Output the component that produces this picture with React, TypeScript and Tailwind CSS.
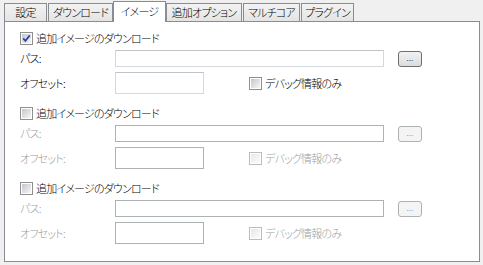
import React from "react";

type Tab = { label: string; w: string; ml: string; active?: boolean };

const TABS: Tab[] = [
  { label: "設定", w: "w-[43px]", ml: "ml-0" },
  { label: "ダウンロード", w: "w-[65px]", ml: "ml-[1px]" },
  { label: "イメージ", w: "w-[53px]", ml: "ml-0", active: true },
  { label: "追加オプション", w: "w-[76px]", ml: "ml-0" },
  { label: "マルチコア", w: "w-[57px]", ml: "ml-[1px]" },
  { label: "プラグイン", w: "w-[53px]", ml: "ml-[1px]" },
];

function CheckBox({ checked, disabled }: { checked?: boolean; disabled?: boolean }) {
  return (
    <span
      className={
        disabled
          ? "relative flex w-[13px] h-[13px] shrink-0 border border-[#bcbcbc] bg-white p-[1px]"
          : "relative flex w-[13px] h-[13px] shrink-0 border border-[#8e8f8f] bg-white p-[1px]"
      }
    >
      <span
        className={
          disabled
            ? "block w-full h-full bg-gradient-to-br from-[#e8e8e8] to-[#fbfbfb]"
            : "block w-full h-full bg-gradient-to-br from-[#c3c6cc] to-[#f7f7f7]"
        }
      />
      {checked && (
        <svg className="absolute left-0 top-0" width="11" height="11" viewBox="0 0 11 11">
          <path d="M2.2 5.4 L4.4 7.8 L8.8 2.4" fill="none" stroke="#2a4a9a" strokeWidth="1.8" />
        </svg>
      )}
    </span>
  );
}

function Group({ enabled }: { enabled?: boolean }) {
  const sub = enabled ? "text-black" : "text-[#a0a0a0]";
  const box = enabled
    ? "bg-white border border-[#d5d8dc] border-t-[#c0c3c8]"
    : "bg-white border border-[#adb2b5]";
  return (
    <div className="flex flex-col">
      <label className="flex items-center h-[13px] gap-[3px] text-black">
        <CheckBox checked={enabled} />
        <span>追加イメージのダウンロード</span>
      </label>
      <div className="flex items-center mt-[5px] h-[17px]">
        <span className={`w-[95px] ${sub}`}>パス:</span>
        <div className={`w-[269px] h-[17px] ${box}`} />
        <div
          className={
            enabled
              ? "ml-[14px] w-[24px] h-[16px] rounded-[3px] border border-[#707070] bg-gradient-to-b from-[#f2f2f2] to-[#dcdcdc] flex items-center justify-center text-[9px] leading-none tracking-normal text-black"
              : "ml-[14px] w-[24px] h-[16px] rounded-[3px] border border-[#adb2b5] bg-[#f4f4f4] flex items-center justify-center text-[9px] leading-none tracking-normal text-[#838383]"
          }
        >
          <span className="-mt-[2px]">...</span>
        </div>
      </div>
      <div className="flex items-center mt-[5px] h-[22px]">
        <span className={`w-[95px] ${sub}`}>オフセット:</span>
        <div className={`w-[89px] h-[22px] ${box}`} />
        <label className="flex items-center ml-[45px] gap-[3px]">
          <CheckBox disabled={!enabled} />
          <span className={sub}>デバッグ情報のみ</span>
        </label>
      </div>
    </div>
  );
}

export default function App() {
  return (
    <div className="w-[483px] h-[265px] bg-[#f0f0f0] pt-[1px] pl-[4px] text-[11px] leading-[13px] font-light tracking-[-0.8px] whitespace-nowrap font-['Noto_Sans_CJK_JP','Noto_Sans',sans-serif] [font-feature-settings:'palt']">
      {/* タブ */}
      <div className="flex items-start h-[21px]">
        {TABS.map((t) =>
          t.active ? (
            <div
              key={t.label}
              className={`${t.w} ${t.ml} relative z-10 h-[21px] border border-b-0 border-[#898c95] bg-white flex items-center justify-center pb-[2px] text-black`}
            >
              {t.label}
            </div>
          ) : (
            <div
              key={t.label}
              className={`${t.w} ${t.ml} mt-[2px] h-[18px] border border-b-0 border-[#898c95] bg-gradient-to-b from-[#f3f3f3] to-[#e4e4e4] flex items-center justify-center text-black`}
            >
              {t.label}
            </div>
          )
        )}
      </div>

      {/* パネル */}
      <div className="-mt-px w-[476px] h-[241px] border border-[#898c95] bg-white">
        <div className="pl-[15px] pt-[10px] flex flex-col gap-[13px]">
          <Group enabled />
          <Group />
          <Group />
        </div>
      </div>
    </div>
  );
}
